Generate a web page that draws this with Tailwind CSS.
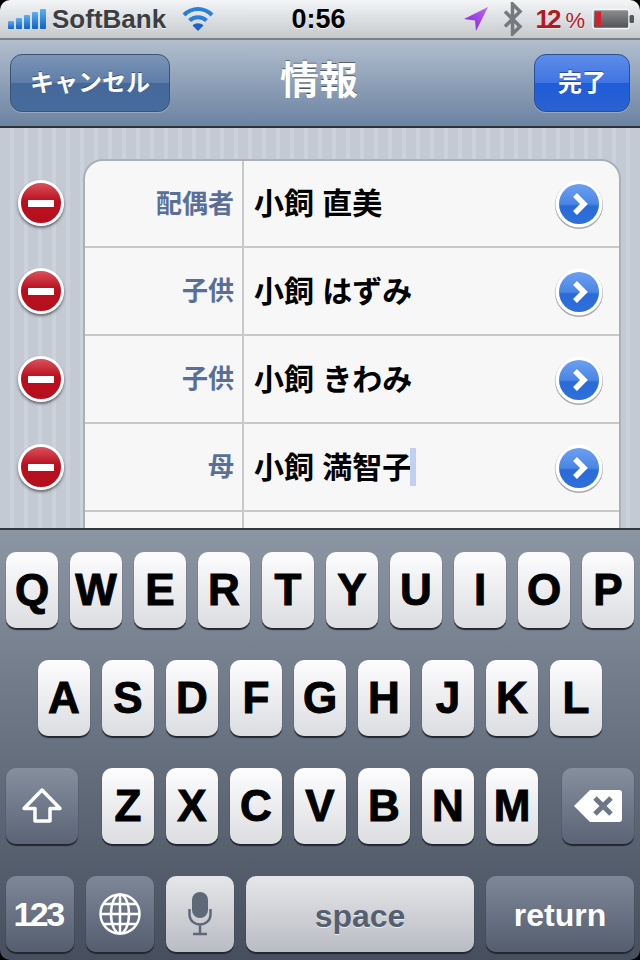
<!DOCTYPE html>
<html lang="ja">
<head>
<meta charset="UTF-8">
<title>情報</title>
<script src="https://cdn.jsdelivr.net/npm/@tailwindcss/browser@4"></script>
</head>
<body class="bg-black">
<div class="w-[640px] h-[960px] flex flex-col overflow-hidden rounded-[10px] font-['Liberation_Sans','Noto_Sans_CJK_JP',sans-serif]">

  <!-- status bar -->
  <div class="h-[40px] shrink-0 grid grid-cols-[1fr_auto_1fr] items-center pl-[8px] pr-[5px] border-b-2 border-[#7c7f84] bg-gradient-to-b from-[#f3f5f7] to-[#c6cacd] [text-shadow:0_1px_0_#ffffffb0]">
    <div class="flex items-center">
      <svg width="38" height="22" viewBox="0 0 38 22">
        <defs><linearGradient id="sig" x1="0" y1="0" x2="0" y2="1"><stop offset="0" stop-color="#5cb0f2"/><stop offset="1" stop-color="#0f62c8"/></linearGradient></defs>
        <rect x="0" y="13" width="6" height="8" rx="1" fill="url(#sig)"/>
        <rect x="8" y="10" width="6" height="11" rx="1" fill="url(#sig)"/>
        <rect x="16" y="7" width="6" height="14" rx="1" fill="url(#sig)"/>
        <rect x="24" y="4" width="6" height="17" rx="1" fill="url(#sig)"/>
        <rect x="32" y="1" width="6" height="20" rx="1" fill="url(#sig)"/>
      </svg>
      <span class="ml-[6px] text-[26px] font-bold leading-none text-[#3b3e43]">SoftBank</span>
      <svg class="ml-[16px]" width="32" height="26" viewBox="0 0 32 26" fill="none" stroke="#2a7fdc" stroke-width="4">
        <path d="M2 9 C10 1 22 1 30 9"/>
        <path d="M7.500 14.500 C12 10 20 10 24.500 14.500"/>
        <path d="M16 25 L10.500 19.500 C13.500 16.500 18.500 16.500 21.500 19.500 Z" fill="#1d62c4" stroke="none"/>
      </svg>
    </div>
    <span class="mr-[6px] text-[27px] font-bold leading-none text-black">0:56</span>
    <div class="flex items-center justify-end">
      <svg width="26" height="26" viewBox="0 0 26 26">
        <defs><linearGradient id="loc" x1="1" y1="0" x2="0" y2="1"><stop offset="0" stop-color="#c06cf0"/><stop offset="1" stop-color="#7a18d8"/></linearGradient></defs>
        <path d="M25 1 L1 13 L12 14.500 L13 25 Z" fill="url(#loc)"/>
      </svg>
      <svg class="ml-[14px]" width="20" height="34" viewBox="0 0 20 34" fill="none" stroke="#76797e" stroke-width="3.500">
        <path d="M2 9.500 L17 24.500 L9.500 32 L9.500 2 L17 9.500 L2 24.500"/>
      </svg>
      <span class="ml-[13px] text-[26px] font-bold leading-none tracking-[-3px] text-[#b3191f]">12<span class="ml-[7px] text-[22px] tracking-normal font-normal">%</span></span>
      <svg class="ml-[7px]" width="43" height="22" viewBox="0 0 43 22">
        <defs><linearGradient id="bat" x1="0" y1="0" x2="0" y2="1"><stop offset="0" stop-color="#8d8f92"/><stop offset="1" stop-color="#4f5154"/></linearGradient></defs>
        <rect x="1" y="1.500" width="36" height="19" rx="2" fill="url(#bat)" stroke="#f5f6f7" stroke-width="1.500"/>
        <rect x="3" y="3.500" width="6" height="15" fill="#d4222a"/>
        <rect x="37.500" y="7" width="4.500" height="8" rx="1.500" fill="#55575a"/>
      </svg>
    </div>
  </div>

  <!-- nav bar -->
  <div class="h-[88px] shrink-0 grid grid-cols-[1fr_auto_1fr] items-center px-[10px] border-b-2 border-[#2f3238] bg-gradient-to-b from-[#b2bece] to-[#6c83a1]">
    <div>
      <div class="w-[160px] h-[58px] flex items-center justify-center rounded-[12px] border border-[#3a5478] text-[24px] font-bold text-white shadow-[0_1px_0_#ffffff40] [text-shadow:0_-1px_0_#00000060] bg-[linear-gradient(#7c95b6,#5d7ca8_50%,#45689b_50%,#486b9e)]">キャンセル</div>
    </div>
    <span class="-mt-[5px] mr-[2px] text-[39px] font-bold leading-none text-white [text-shadow:0_-1px_0_#00000070]">情報</span>
    <div class="flex justify-end">
      <div class="w-[96px] h-[58px] flex items-center justify-center rounded-[12px] border border-[#2a4f94] text-[24px] font-bold text-white shadow-[0_1px_0_#ffffff40] [text-shadow:0_-1px_0_#00000060] bg-[linear-gradient(#5d8ce8,#3f74e2_50%,#1e5cdb_50%,#2a62cf)]">完了</div>
    </div>
  </div>

  <!-- fields -->
  <div class="h-[400px] shrink-0 flex overflow-hidden pt-[31px] bg-[repeating-linear-gradient(90deg,#c3cad4_0,#c3cad4_10px,#cbd2db_10px,#cbd2db_14px)]">
    <div class="w-[83px] shrink-0 flex flex-col">
      <div class="h-[88px] flex items-center justify-center pr-[1px]"><div class="w-[46px] h-[46px] rounded-full border-[3px] border-white flex items-center justify-center shadow-[0_2px_3px_#00000080] bg-[linear-gradient(#d8525c,#b90f1e_45%,#b5101d)]"><div class="w-[26px] h-[7px] bg-white"></div></div></div>
      <div class="h-[88px] flex items-center justify-center pr-[1px]"><div class="w-[46px] h-[46px] rounded-full border-[3px] border-white flex items-center justify-center shadow-[0_2px_3px_#00000080] bg-[linear-gradient(#d8525c,#b90f1e_45%,#b5101d)]"><div class="w-[26px] h-[7px] bg-white"></div></div></div>
      <div class="h-[88px] flex items-center justify-center pr-[1px]"><div class="w-[46px] h-[46px] rounded-full border-[3px] border-white flex items-center justify-center shadow-[0_2px_3px_#00000080] bg-[linear-gradient(#d8525c,#b90f1e_45%,#b5101d)]"><div class="w-[26px] h-[7px] bg-white"></div></div></div>
      <div class="h-[88px] flex items-center justify-center pr-[1px]"><div class="w-[46px] h-[46px] rounded-full border-[3px] border-white flex items-center justify-center shadow-[0_2px_3px_#00000080] bg-[linear-gradient(#d8525c,#b90f1e_45%,#b5101d)]"><div class="w-[26px] h-[7px] bg-white"></div></div></div>
    </div>
    <div class="w-[538px] h-[460px] shrink-0 bg-[#f7f7f7] rounded-t-[20px] border-2 border-[#abb0b6] flex flex-col">
      <div class="h-[87px] shrink-0 flex items-center border-b-2 border-[#c6c8ca]">
        <div class="w-[159px] h-full flex items-center justify-end pt-[1px] pr-[8px] border-r-2 border-[#c6c8ca] text-[26px] font-bold text-[#5a6f98]">配偶者</div>
        <div class="flex-1 pl-[10px] text-[30px] font-bold text-black">小飼 直美</div>
        <svg class="mr-[16px] mt-[3px]" width="48" height="50" viewBox="0 0 48 50"><defs><linearGradient id="blu" x1="0" y1="0" x2="0" y2="1"><stop offset="0" stop-color="#6d9ff0"/><stop offset="0.5" stop-color="#4a86e6"/><stop offset="0.55" stop-color="#2a6ad8"/><stop offset="1" stop-color="#2f70dc"/></linearGradient></defs><circle cx="24" cy="25" r="24" fill="#00000050"/><circle cx="24" cy="24" r="23.500" fill="#fff"/><circle cx="24" cy="24" r="20" fill="url(#blu)"/><path d="M20 15 L29 24 L20 33" fill="none" stroke="#fff" stroke-width="5.500"/></svg>
      </div>
      <div class="h-[88px] shrink-0 flex items-center border-b-2 border-[#c6c8ca]">
        <div class="w-[159px] h-full flex items-center justify-end pt-[1px] pr-[8px] border-r-2 border-[#c6c8ca] text-[26px] font-bold text-[#5a6f98]">子供</div>
        <div class="flex-1 pl-[10px] text-[30px] font-bold text-black">小飼 はずみ</div>
        <svg class="mr-[16px] mt-[3px]" width="48" height="50" viewBox="0 0 48 50"><circle cx="24" cy="25" r="24" fill="#00000050"/><circle cx="24" cy="24" r="23.500" fill="#fff"/><circle cx="24" cy="24" r="20" fill="url(#blu)"/><path d="M20 15 L29 24 L20 33" fill="none" stroke="#fff" stroke-width="5.500"/></svg>
      </div>
      <div class="h-[88px] shrink-0 flex items-center border-b-2 border-[#c6c8ca]">
        <div class="w-[159px] h-full flex items-center justify-end pt-[1px] pr-[8px] border-r-2 border-[#c6c8ca] text-[26px] font-bold text-[#5a6f98]">子供</div>
        <div class="flex-1 pl-[10px] text-[30px] font-bold text-black">小飼 きわみ</div>
        <svg class="mr-[16px] mt-[3px]" width="48" height="50" viewBox="0 0 48 50"><circle cx="24" cy="25" r="24" fill="#00000050"/><circle cx="24" cy="24" r="23.500" fill="#fff"/><circle cx="24" cy="24" r="20" fill="url(#blu)"/><path d="M20 15 L29 24 L20 33" fill="none" stroke="#fff" stroke-width="5.500"/></svg>
      </div>
      <div class="h-[88px] shrink-0 flex items-center border-b-2 border-[#c6c8ca]">
        <div class="w-[159px] h-full flex items-center justify-end pt-[1px] pr-[8px] border-r-2 border-[#c6c8ca] text-[26px] font-bold text-[#5a6f98]">母</div>
        <div class="flex-1 pl-[10px] flex items-center text-[30px] font-bold text-black">小飼 満智子<span class="w-[6px] h-[38px] -ml-[2px] bg-[#c3cff2]"></span></div>
        <svg class="mr-[16px] mt-[3px]" width="48" height="50" viewBox="0 0 48 50"><circle cx="24" cy="25" r="24" fill="#00000050"/><circle cx="24" cy="24" r="23.500" fill="#fff"/><circle cx="24" cy="24" r="20" fill="url(#blu)"/><path d="M20 15 L29 24 L20 33" fill="none" stroke="#fff" stroke-width="5.500"/></svg>
      </div>
      <div class="flex-1 flex">
        <div class="w-[159px] border-r-2 border-[#c6c8ca]"></div>
      </div>
    </div>
  </div>

  <!-- keyboard -->
  <div class="flex-1 flex flex-col gap-[32px] px-[6px] pt-[22px] border-t-2 border-[#33373e] bg-gradient-to-b from-[#8c96a3] via-[#677180] to-[#474f5e]">
    <div class="flex justify-center gap-[12px] text-[44px] font-bold text-black [-webkit-text-stroke:1px_#000]">
      <div class="w-[52px] h-[76px] flex items-center justify-center rounded-[10px] shadow-[0_2px_1px_#22262e] bg-gradient-to-b from-[#fdfdfe] to-[#dcdde1]">Q</div>
      <div class="w-[52px] h-[76px] flex items-center justify-center rounded-[10px] shadow-[0_2px_1px_#22262e] bg-gradient-to-b from-[#fdfdfe] to-[#dcdde1]">W</div>
      <div class="w-[52px] h-[76px] flex items-center justify-center rounded-[10px] shadow-[0_2px_1px_#22262e] bg-gradient-to-b from-[#fdfdfe] to-[#dcdde1]">E</div>
      <div class="w-[52px] h-[76px] flex items-center justify-center rounded-[10px] shadow-[0_2px_1px_#22262e] bg-gradient-to-b from-[#fdfdfe] to-[#dcdde1]">R</div>
      <div class="w-[52px] h-[76px] flex items-center justify-center rounded-[10px] shadow-[0_2px_1px_#22262e] bg-gradient-to-b from-[#fdfdfe] to-[#dcdde1]">T</div>
      <div class="w-[52px] h-[76px] flex items-center justify-center rounded-[10px] shadow-[0_2px_1px_#22262e] bg-gradient-to-b from-[#fdfdfe] to-[#dcdde1]">Y</div>
      <div class="w-[52px] h-[76px] flex items-center justify-center rounded-[10px] shadow-[0_2px_1px_#22262e] bg-gradient-to-b from-[#fdfdfe] to-[#dcdde1]">U</div>
      <div class="w-[52px] h-[76px] flex items-center justify-center rounded-[10px] shadow-[0_2px_1px_#22262e] bg-gradient-to-b from-[#fdfdfe] to-[#dcdde1]">I</div>
      <div class="w-[52px] h-[76px] flex items-center justify-center rounded-[10px] shadow-[0_2px_1px_#22262e] bg-gradient-to-b from-[#fdfdfe] to-[#dcdde1]">O</div>
      <div class="w-[52px] h-[76px] flex items-center justify-center rounded-[10px] shadow-[0_2px_1px_#22262e] bg-gradient-to-b from-[#fdfdfe] to-[#dcdde1]">P</div>
    </div>
    <div class="flex justify-center gap-[12px] text-[44px] font-bold text-black [-webkit-text-stroke:1px_#000]">
      <div class="w-[52px] h-[76px] flex items-center justify-center rounded-[10px] shadow-[0_2px_1px_#22262e] bg-gradient-to-b from-[#fdfdfe] to-[#dcdde1]">A</div>
      <div class="w-[52px] h-[76px] flex items-center justify-center rounded-[10px] shadow-[0_2px_1px_#22262e] bg-gradient-to-b from-[#fdfdfe] to-[#dcdde1]">S</div>
      <div class="w-[52px] h-[76px] flex items-center justify-center rounded-[10px] shadow-[0_2px_1px_#22262e] bg-gradient-to-b from-[#fdfdfe] to-[#dcdde1]">D</div>
      <div class="w-[52px] h-[76px] flex items-center justify-center rounded-[10px] shadow-[0_2px_1px_#22262e] bg-gradient-to-b from-[#fdfdfe] to-[#dcdde1]">F</div>
      <div class="w-[52px] h-[76px] flex items-center justify-center rounded-[10px] shadow-[0_2px_1px_#22262e] bg-gradient-to-b from-[#fdfdfe] to-[#dcdde1]">G</div>
      <div class="w-[52px] h-[76px] flex items-center justify-center rounded-[10px] shadow-[0_2px_1px_#22262e] bg-gradient-to-b from-[#fdfdfe] to-[#dcdde1]">H</div>
      <div class="w-[52px] h-[76px] flex items-center justify-center rounded-[10px] shadow-[0_2px_1px_#22262e] bg-gradient-to-b from-[#fdfdfe] to-[#dcdde1]">J</div>
      <div class="w-[52px] h-[76px] flex items-center justify-center rounded-[10px] shadow-[0_2px_1px_#22262e] bg-gradient-to-b from-[#fdfdfe] to-[#dcdde1]">K</div>
      <div class="w-[52px] h-[76px] flex items-center justify-center rounded-[10px] shadow-[0_2px_1px_#22262e] bg-gradient-to-b from-[#fdfdfe] to-[#dcdde1]">L</div>
    </div>
    <div class="flex justify-between text-[44px] font-bold text-black [-webkit-text-stroke:1px_#000]">
      <div class="w-[72px] h-[76px] flex items-center justify-center rounded-[10px] shadow-[0_2px_1px_#22262e] bg-gradient-to-b from-[#868f9d] to-[#5a6476]">
        <svg width="42" height="36" viewBox="0 0 42 36"><path d="M21 2 L39 20.500 L29 20.500 L29 33 L14 33 L14 20.500 L3 20.500 Z" fill="none" stroke="#fff" stroke-width="3.500" stroke-linejoin="round"/></svg>
      </div>
      <div class="flex gap-[12px]">
        <div class="w-[52px] h-[76px] flex items-center justify-center rounded-[10px] shadow-[0_2px_1px_#22262e] bg-gradient-to-b from-[#fdfdfe] to-[#dcdde1]">Z</div>
        <div class="w-[52px] h-[76px] flex items-center justify-center rounded-[10px] shadow-[0_2px_1px_#22262e] bg-gradient-to-b from-[#fdfdfe] to-[#dcdde1]">X</div>
        <div class="w-[52px] h-[76px] flex items-center justify-center rounded-[10px] shadow-[0_2px_1px_#22262e] bg-gradient-to-b from-[#fdfdfe] to-[#dcdde1]">C</div>
        <div class="w-[52px] h-[76px] flex items-center justify-center rounded-[10px] shadow-[0_2px_1px_#22262e] bg-gradient-to-b from-[#fdfdfe] to-[#dcdde1]">V</div>
        <div class="w-[52px] h-[76px] flex items-center justify-center rounded-[10px] shadow-[0_2px_1px_#22262e] bg-gradient-to-b from-[#fdfdfe] to-[#dcdde1]">B</div>
        <div class="w-[52px] h-[76px] flex items-center justify-center rounded-[10px] shadow-[0_2px_1px_#22262e] bg-gradient-to-b from-[#fdfdfe] to-[#dcdde1]">N</div>
        <div class="w-[52px] h-[76px] flex items-center justify-center rounded-[10px] shadow-[0_2px_1px_#22262e] bg-gradient-to-b from-[#fdfdfe] to-[#dcdde1]">M</div>
      </div>
      <div class="w-[72px] h-[76px] flex items-center justify-center rounded-[10px] shadow-[0_2px_1px_#22262e] bg-gradient-to-b from-[#868f9d] to-[#5a6476]">
        <svg width="50" height="34" viewBox="0 0 50 34"><path d="M1 17 L17 1 L46 1 Q49 1 49 4 L49 30 Q49 33 46 33 L17 33 Z" fill="#fff"/><path d="M22 9 L38 25 M38 9 L22 25" stroke="#6d7685" stroke-width="5"/></svg>
      </div>
    </div>
    <div class="flex gap-[12px] text-[32px] font-bold">
      <div class="w-[68px] h-[76px] flex items-center justify-center pr-[4px] rounded-[10px] text-[34px] tracking-[-2.500px] text-white shadow-[0_2px_1px_#22262e] bg-gradient-to-b from-[#7e8797] to-[#545e70]">123</div>
      <div class="w-[68px] h-[76px] flex items-center justify-center rounded-[10px] shadow-[0_2px_1px_#22262e] bg-gradient-to-b from-[#7e8797] to-[#545e70]">
        <svg width="42" height="42" viewBox="0 0 42 42" fill="none" stroke="#fff" stroke-width="2.500"><circle cx="21" cy="21" r="19.500"/><ellipse cx="21" cy="21" rx="9" ry="19.500"/><path d="M21 1.500 V40.500 M1.500 21 H40.500 M4.500 11 H37.500 M4.500 31 H37.500"/></svg>
      </div>
      <div class="w-[68px] h-[76px] flex items-center justify-center rounded-[10px] shadow-[0_2px_1px_#22262e] bg-gradient-to-b from-[#e6e7ea] to-[#b9bcc3]">
        <svg width="24" height="44" viewBox="0 0 24 44" fill="none" stroke="#5f6878" stroke-width="2.500"><rect x="4" y="0" width="16" height="26" rx="8" fill="#5f6878" stroke="none"/><path d="M1.500 17 V22 C1.500 36 22.500 36 22.500 22 V17 M12 33 V41 M5 42 H19"/></svg>
      </div>
      <div class="w-[228px] h-[76px] flex items-center justify-center pt-[3px] rounded-[10px] text-[#565f6f] [text-shadow:0_1px_0_#ffffffb0] shadow-[0_2px_1px_#22262e] bg-gradient-to-b from-[#e6e7ea] to-[#b9bcc3]">space</div>
      <div class="flex-1 h-[76px] flex items-center justify-center pt-[1px] rounded-[10px] text-white shadow-[0_2px_1px_#22262e] bg-gradient-to-b from-[#7e8797] to-[#545e70]">return</div>
    </div>
  </div>
</div>
</body>
</html>
